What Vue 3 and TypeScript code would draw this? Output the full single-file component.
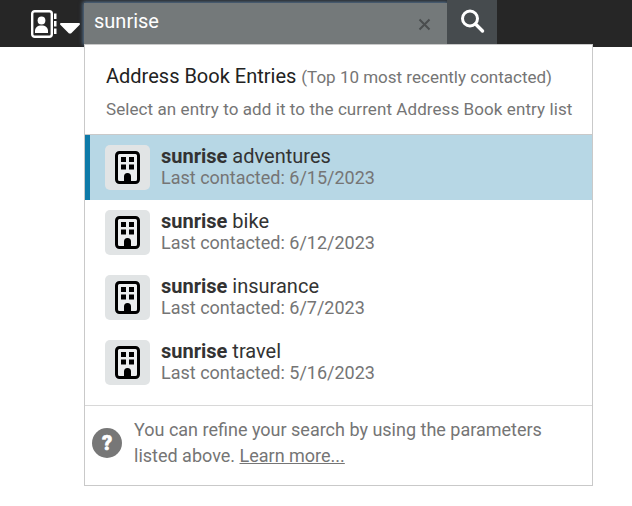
<script setup lang="ts">
const entries = [
  { name: 'adventures', date: '6/15/2023', active: true },
  { name: 'bike', date: '6/12/2023', active: false },
  { name: 'insurance', date: '6/7/2023', active: false },
  { name: 'travel', date: '5/16/2023', active: false },
]
</script>

<template>
  <div class="page">
    <header class="topbar">
      <div class="book-btn">
        <svg class="book" width="28" height="30" viewBox="0 0 28 30">
          <rect x="3.200" y="2.200" width="19.600" height="25.600" rx="2.500" fill="none" stroke="#fff" stroke-width="2.400" />
          <circle cx="12.500" cy="11.500" r="3.900" fill="#fff" />
          <path d="M6 24v-2c0-3.500 2.500-5.500 6.500-5.500s6.500 2 6.500 5.500v2z" fill="#fff" />
          <rect x="25" y="4.500" width="2.500" height="5.500" fill="#fff" />
          <rect x="25" y="12" width="2.500" height="5.500" fill="#fff" />
          <rect x="25" y="19.500" width="2.500" height="5.500" fill="#fff" />
        </svg>
        <svg class="caret" width="20" height="11" viewBox="0 0 20 11"><path d="M1 0h18a1 1 0 0 1 .7 1.700L11 10.500H9L.3 1.700A1 1 0 0 1 1 0z" fill="#fff" /></svg>
      </div>
      <div class="search">
        <span class="query">sunrise</span>
        <svg class="clear" width="13" height="13" viewBox="0 0 13 13"><path d="M1.500 1.500l10 10M11.500 1.500l-10 10" stroke="#4a4d4e" stroke-width="2" /></svg>
      </div>
      <div class="go">
        <svg width="26" height="26" viewBox="0 0 26 26"><circle cx="11" cy="10.500" r="7.500" fill="none" stroke="#fff" stroke-width="3" /><path d="M16.500 16l7 7" stroke="#fff" stroke-width="3.400" stroke-linecap="round" /></svg>
      </div>
    </header>
    <section class="panel">
      <div class="head">
        <div class="title"><strong>Address Book Entries</strong> <span>(Top 10 most recently contacted)</span></div>
        <div class="hint">Select an entry to add it to the current Address Book entry list</div>
      </div>
      <ul class="list">
        <li v-for="e in entries" :key="e.name" class="row" :class="{ active: e.active }">
          <div class="tile">
            <svg width="25" height="33" viewBox="0 0 25 33">
              <rect x="1.500" y="1.500" width="22" height="30" rx="3" fill="#eceeef" stroke="#000" stroke-width="3" />
              <path d="M6 6h5v5H6zM14 6h5v5h-5zM6 13.500h5v5H6zM14 13.500h5v5h-5zM9 31v-5.500a3.500 3.500 0 0 1 7 0V31z" fill="#000" />
            </svg>
          </div>
          <div class="text">
            <div class="name"><b>sunrise</b> {{ e.name }}</div>
            <div class="date">Last contacted: {{ e.date }}</div>
          </div>
        </li>
      </ul>
      <footer class="foot">
        <div class="help">?</div>
        <p>You can refine your search by using the parameters listed above. <a>Learn more...</a></p>
      </footer>
    </section>
  </div>
</template>

<style>
html, body { margin: 0; background: #fff; }
</style>

<style scoped>
.page { width: 632px; height: 506px; overflow: hidden; font-family: Roboto, "Liberation Sans", sans-serif; position: relative; }
.topbar { height: 47px; background: #262626; display: flex; }
.book-btn { width: 84px; flex: none; display: flex; align-items: flex-start; box-sizing: border-box; padding: 9px 0 0 29px; }
.book { flex: none; }
.caret { margin: 14px 0 0 3px; flex: none; }
.search { flex: none; width: 363px; margin-top: 3px; height: 41px; background: #74797a; box-shadow: 0 0 4px 1px #5b7b9c; display: flex; align-items: flex-start; justify-content: space-between; padding: 6px 16px 0 10px; box-sizing: border-box; }
.query { color: #fff; font-size: 20px; line-height: 24px; }
.clear { margin-top: 9px; }
.go { flex: none; width: 50px; height: 44px; background: #464b4e; display: flex; align-items: center; justify-content: center; padding-bottom: 3px; box-sizing: border-box; }
.panel { position: absolute; left: 84px; top: 44px; width: 509px; height: 442px; box-sizing: border-box; border: 1px solid #c9c9c9; background: #fff; display: flex; flex-direction: column; }
.head { height: 90px; box-sizing: border-box; padding: 20px 20px 0 21px; border-bottom: 1px solid #c9c9c9; flex: none; }
.title { color: #222; font-size: 20px; line-height: 22px; white-space: nowrap; }
.title strong { font-weight: 400; }
.title span { font-size: 17px; color: #757575; }
.hint { font-size: 17px; letter-spacing: 0.08px; line-height: 20px; color: #757575; margin-top: 11px; white-space: nowrap; }
.list { list-style: none; margin: 0; padding: 0; }
.row { height: 65px; display: flex; align-items: center; box-sizing: border-box; padding-left: 20px; }
.row.active { background: #b7d7e5; border-left: 5px solid #0e7aa8; padding-left: 15px; }
.tile { width: 45px; height: 45px; background: #e1e4e5; border-radius: 5px; display: flex; align-items: center; justify-content: center; flex: none; }
.text { margin-left: 11px; padding-bottom: 2px; }
.name { color: #333; font-size: 20px; line-height: 22px; }
.name b { font-weight: 700; }
.date { color: #757575; font-size: 18px; line-height: 21px; }
.foot { margin-top: 10px; border-top: 1px solid #d8d8d8; display: flex; align-items: center; padding: 11px 20px 0 7px; }
.help { width: 30px; height: 30px; margin: 0 12px 0 0; border-radius: 50%; background: #777; color: #fff; font-weight: 900; font-size: 20px; -webkit-text-stroke: 0.6px #fff; display: flex; align-items: center; justify-content: center; flex: none; }
.foot p { margin: 0; color: #757575; font-size: 18px; line-height: 26px; }
.foot a { text-decoration: underline; }
</style>
